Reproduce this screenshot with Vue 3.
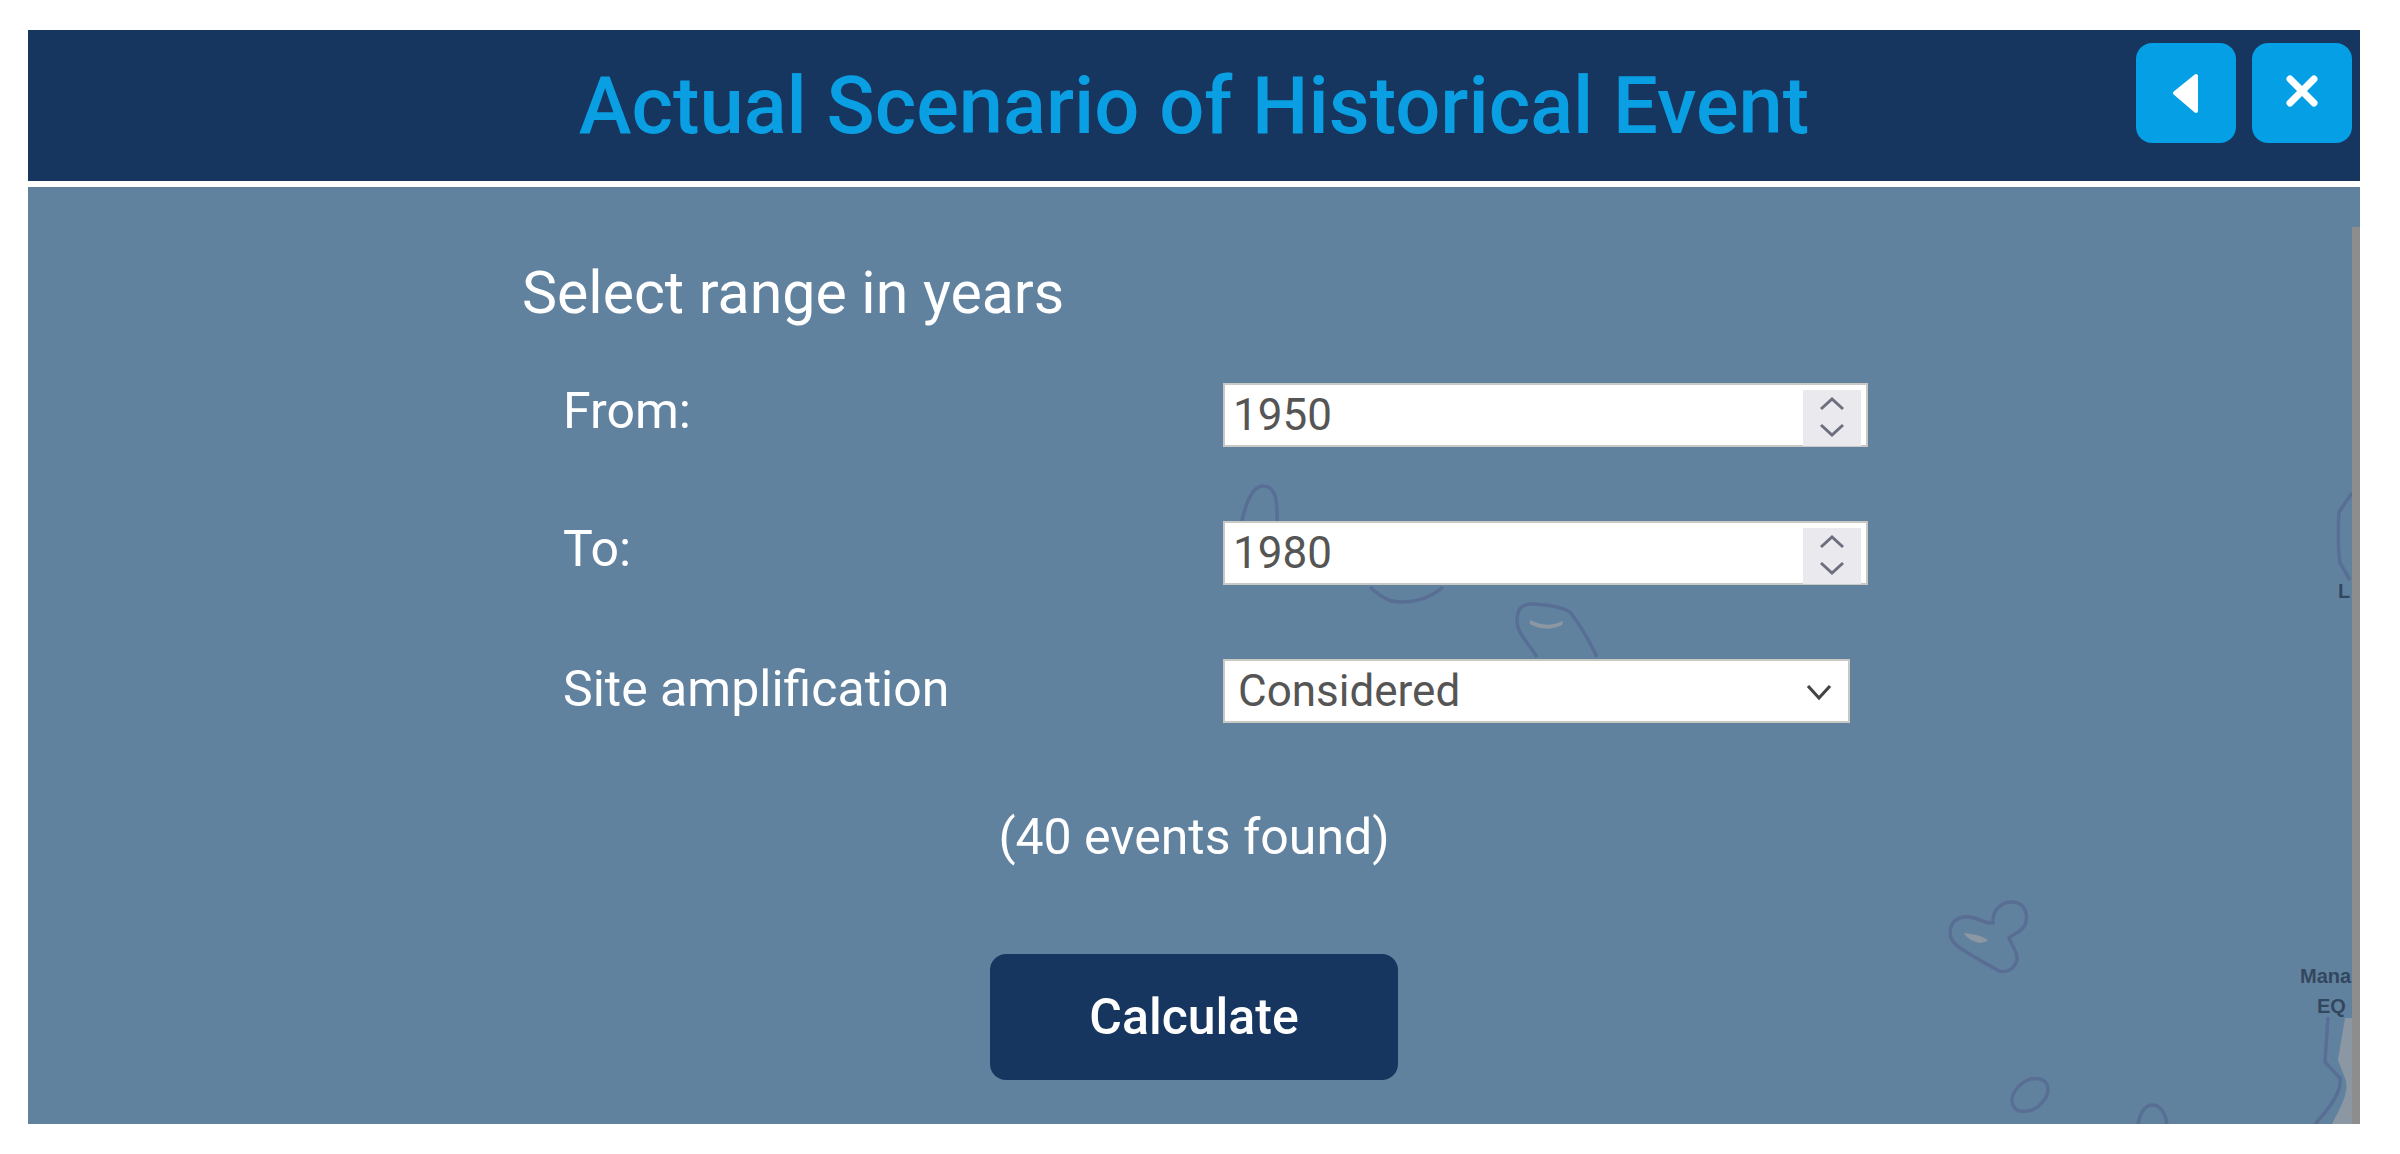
<script setup>
import { ref } from 'vue'

const yearFrom = ref(1950)
const yearTo = ref(1980)
const site = ref('Considered')
const eventCount = ref(40)

const yearRows = [
  { label: 'From:', model: yearFrom },
  { label: 'To:', model: yearTo },
]
</script>

<template>
  <div class="panel">
    <header class="head">
      <span></span>
      <h1 class="title">Actual Scenario of Historical Event</h1>
      <div class="head-btns">
        <button class="icon-btn" aria-label="Back">
          <svg width="100" height="100" viewBox="0 0 100 100">
            <path d="M39 50 L60 33 V68 Z" fill="#fff" stroke="#fff" stroke-width="4" stroke-linejoin="round" />
          </svg>
        </button>
        <button class="icon-btn" aria-label="Close">
          <svg width="100" height="100" viewBox="0 0 100 100">
            <path d="M38 36 L62 60 M62 36 L38 60" fill="none" stroke="#fff" stroke-width="7" stroke-linecap="round" />
          </svg>
        </button>
      </div>
    </header>

    <main class="body">
      <!-- map seen through the overlay, in page coordinates -->
      <svg class="map" viewBox="28 187 2332 937" width="2332" height="937">
        <g fill="none" stroke="#586e95" stroke-width="3.5">
          <path d="M1240 530 C1244 510 1250 486 1263 486 C1276 486 1278 500 1277 530" />
          <path d="M1370 587 C1382 598 1390 602 1400 602 C1418 602 1432 597 1443 587" />
          <path d="M1537 657 C1526 640 1517 632 1517 622 C1517 608 1522 604 1532 604 C1545 605 1560 606 1570 612 C1580 625 1590 642 1597 657" />
          <path d="M1950 933 C1950 920 1960 916 1970 917 C1980 919 1988 924 1993 923 C1992 910 2002 901 2013 902 C2024 903 2028 912 2026 922 C2024 932 2012 934 2009 938 C2012 946 2018 952 2017 960 C2014 970 2006 973 1999 971 C1985 963 1972 956 1960 948 C1954 944 1950 940 1950 933 Z" />
          <ellipse cx="2030" cy="1095" rx="20" ry="14" transform="rotate(-38 2030 1095)" />
          <path d="M2138 1124 C2140 1112 2146 1105 2152 1105 C2160 1105 2165 1112 2167 1124" />
          <path d="M2328 1017 L2325 1062 L2340 1078 C2342 1090 2330 1108 2315 1124" />
          <path d="M2352 493 L2339 512 C2338 530 2338 550 2340 563 L2350 580" />
        </g>
        <g fill="#9a9fa6" opacity="0.75">
          <path d="M1530 620 C1542 626 1552 626 1563 621 L1562 625 C1552 630 1540 630 1530 624 Z" />
          <path d="M1964 933 C1974 934 1984 936 1988 941 L1980 943 C1974 942 1966 938 1964 933 Z" />
          <path d="M2345 1018 L2352 1018 V1124 H2332 C2342 1105 2350 1090 2345 1078 L2338 1060 Z" />
        </g>
        <g class="map-labels">
          <text x="2300" y="983">Mana</text>
          <text x="2317" y="1013">EQ</text>
          <text x="2338" y="598">L</text>
        </g>
      </svg>

      <div class="content">
        <h2 class="range-title">Select range in years</h2>

        <div class="form">
          <div v-for="row in yearRows" :key="row.label" class="form-row">
            <label class="form-label">{{ row.label }}</label>
            <div class="num-wrap">
              <input v-model="row.model.value" class="field num-field" type="text" />
              <span class="spinner">
                <svg width="58" height="56" viewBox="0 0 58 56">
                  <path d="M18 19 L29 9 L40 19 M18 35 L29 45 L40 35" fill="none" stroke="#6d6e7e" stroke-width="3" />
                </svg>
              </span>
            </div>
          </div>

          <div class="form-row">
            <label class="form-label site-label">Site amplification</label>
            <div class="select-wrap">
              <select v-model="site" class="field select-field">
                <option>Considered</option>
                <option>Not considered</option>
              </select>
              <svg class="select-arrow" width="26" height="18" viewBox="0 0 26 18">
                <path d="M2 3 L13 15 L24 3" fill="none" stroke="#444" stroke-width="3.2" />
              </svg>
            </div>
          </div>
        </div>

        <p class="found">({{ eventCount }} events found)</p>
        <button class="calc-btn">Calculate</button>
      </div>

      <div class="scrollbar"></div>
    </main>
  </div>
</template>

<style>
html, body { background: #fff; }
</style>

<style scoped>
.panel {
  width: 2332px;
  margin: 30px 0 30px 28px;
  font-family: Roboto, "Liberation Sans", sans-serif;
}

.head {
  height: 151px;
  box-sizing: border-box;
  background: #17365f;
  display: grid;
  grid-template-columns: 1fr auto 1fr;
  align-items: center;
}
.title {
  margin: 0;
  font-size: 79.5px;
  font-weight: 500;
  color: #0a9ee2;
  white-space: nowrap;
}
.head-btns {
  justify-self: end;
  align-self: start;
  display: flex;
  gap: 16px;
  padding: 13px 8px 0 0;
}
.icon-btn {
  width: 100px;
  height: 100px;
  padding: 0;
  border: 0;
  border-radius: 16px;
  background: #049fe5;
}
.icon-btn svg { display: block; }

.body {
  position: relative;
  height: 937px;
  margin-top: 6px;
  background: #61829f;
  overflow: hidden;
  color: #fff;
}
.map { position: absolute; left: 0; top: 0; }
.map-labels text {
  font-family: "Liberation Sans", sans-serif;
  font-size: 20px;
  font-weight: 700;
  fill: #33475f;
}
.scrollbar {
  position: absolute;
  right: 0;
  top: 40px;
  bottom: 0;
  width: 8px;
  background: #8d8d8d;
}

.content {
  position: relative;
  display: flex;
  flex-direction: column;
  padding: 74px 0 0 494px;
}
.range-title {
  margin: 0 0 58px;
  font-size: 59px;
  line-height: 64px;
  font-weight: 400;
}
.form {
  display: flex;
  flex-direction: column;
  gap: 74px;
  padding-left: 41px;
}
.form-row { display: flex; height: 64px; }
.form-label {
  width: 660px;
  font-size: 50px;
  line-height: 56px;
}
.site-label { line-height: 60px; }
.num-wrap, .select-wrap { position: relative; }
.field {
  height: 64px;
  box-sizing: border-box;
  border: 0;
  border-radius: 0;
  outline: 0;
  background: #fff;
  box-shadow: inset 0 0 0 2px #c9c8c4;
  font-family: Roboto, "Liberation Sans", sans-serif;
  font-size: 44px;
  color: #555;
}
.num-field { display: block; width: 645px; padding: 0 70px 0 10px; }
.select-field {
  display: block;
  width: 627px;
  padding: 0 60px 0 15px;
  appearance: none;
}
.spinner {
  position: absolute;
  right: 7px;
  top: 7px;
  height: 56px;
  background: #e9e9ee;
}
.spinner svg { display: block; }
.select-arrow { position: absolute; right: 18px; top: 24px; }

.found {
  margin: 86px 0 0;
  margin-left: -494px;
  text-align: center;
  font-size: 50px;
  line-height: 56px;
}
.calc-btn {
  align-self: center;
  margin: 89px 0 0 -494px;
  width: 408px;
  height: 126px;
  border: 0;
  border-radius: 16px;
  background: #17365f;
  color: #fff;
  font-family: Roboto, "Liberation Sans", sans-serif;
  font-size: 50px;
  font-weight: 500;
}
</style>
